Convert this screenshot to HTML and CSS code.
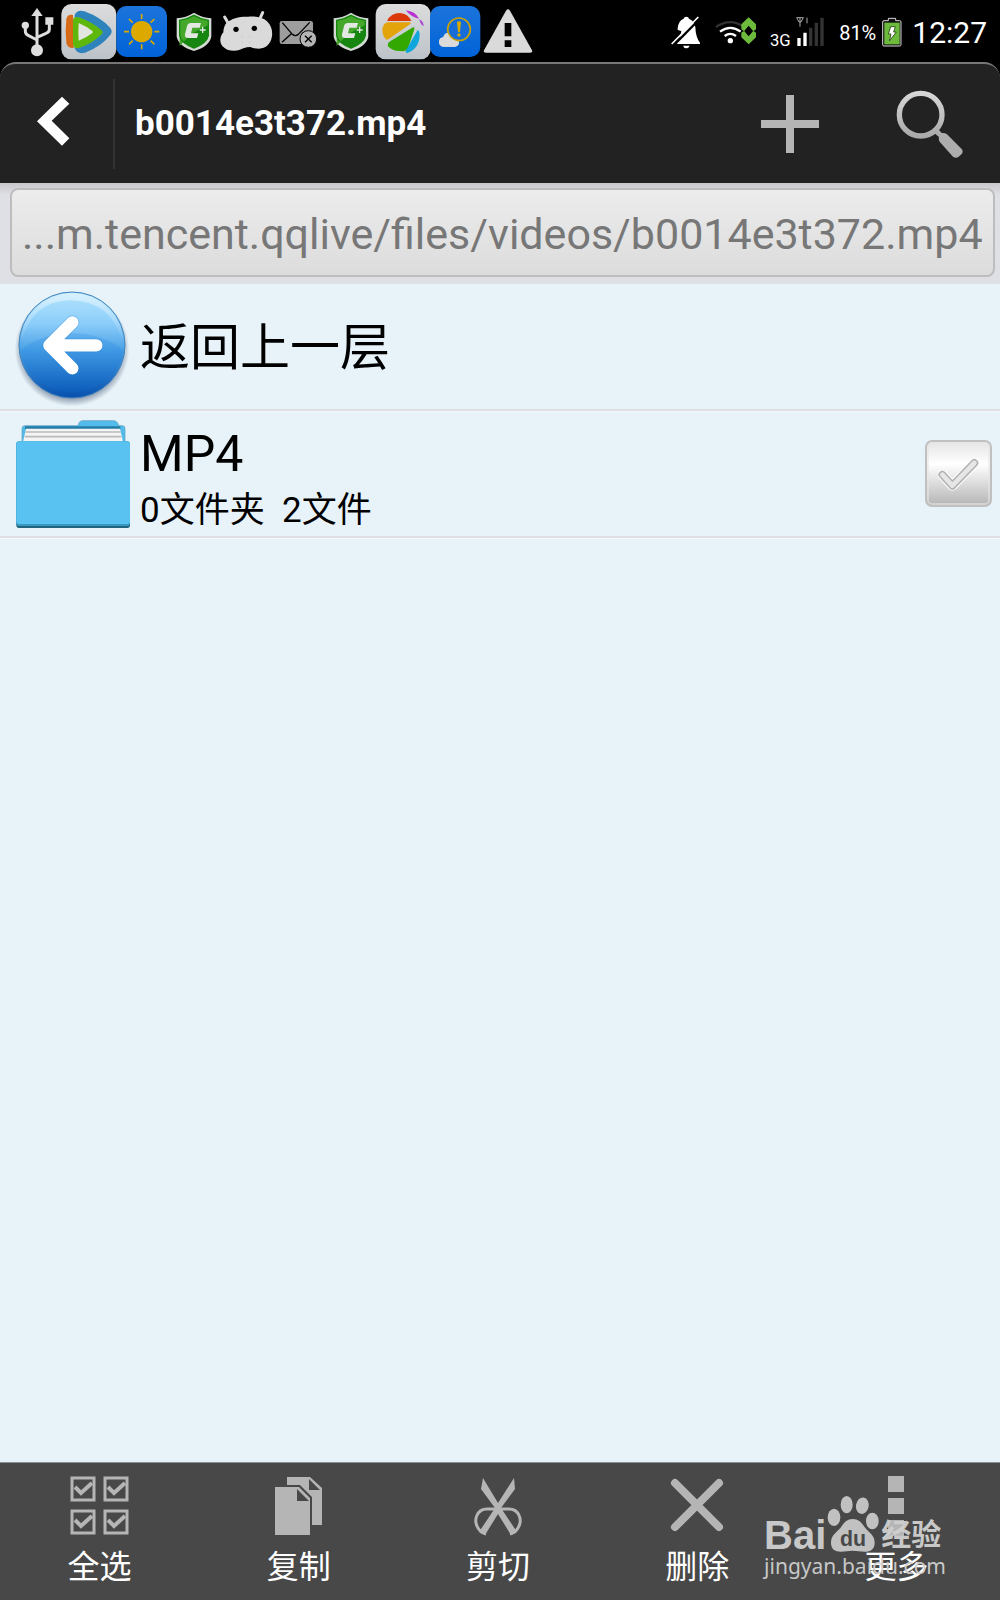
FILE: index.html
```html
<!DOCTYPE html>
<html lang="zh-CN">
<head>
    <meta charset="UTF-8">
    <meta name="viewport" content="width=device-width, initial-scale=1">
    <title>b0014e3t372.mp4</title>
    <link rel="stylesheet" href="styles.css">
</head>
<body>
    <div class="status-bar">
        <div class="notifications">
            <!-- usb -->
            <svg class="note-icon" viewBox="33 0 156 186" fill="none" stroke="#dedede" stroke-width="9">
                <path d="M111 42v110M76 80v14q0 9 10 13l25 13M148 66v22q0 9-10 12l-27 12"/>
                <path d="M111 24l17 24H94zM136 52h24v22h-24z" fill="#dedede" stroke="none"/>
                <circle cx="76" cy="76" r="11" fill="#dedede" stroke="none"/>
                <circle cx="111" cy="151" r="18" fill="#dedede" stroke="none"/>
            </svg>
            <!-- video player -->
            <svg class="note-icon" viewBox="188 0 156 186">
                <defs>
                    <linearGradient id="tile" x1="0" y1="0" x2="0" y2="1">
                        <stop offset="0" stop-color="#dcdcdc"/>
                        <stop offset="1" stop-color="#bcc3c9"/>
                    </linearGradient>
                    <linearGradient id="blueTile" x1="0" y1="0" x2="0" y2="1">
                        <stop offset="0" stop-color="#1c74db"/>
                        <stop offset="1" stop-color="#0063d8"/>
                    </linearGradient>
                </defs>
                <rect x="183" y="12" width="165" height="166" rx="30" fill="url(#tile)"/>
                <path d="M223 45q8-17 29-11 50 18 78 50 8 11 0 21-29 36-76 53-24 6-31-14z" fill="#2f83bd"/>
                <path d="M218 45q-17-3-20 13-4 35 0 70 4 18 22 16z" fill="#d76a16"/>
                <path d="M218 62q1-15 18-10 38 14 67 38 8 7 0 14-30 28-68 40-15 3-17-12z" fill="#5eb80c"/>
                <path d="M235 69q22 9 41 24 4 3 0 6-19 15-41 23-2-27 0-53z" fill="#e2e6df"/>
            </svg>
            <!-- weather -->
            <svg class="note-icon" viewBox="345 0 156 186">
                <rect x="346" y="18" width="152" height="153" rx="30" fill="url(#blueTile)"/>
                <circle cx="422" cy="95" r="32" fill="#dba900"/>
                <path d="M422 42v15M422 133v15M369 95h15M460 95h15M384 57l11 11M449 122l11 11M460 57l-11 11M395 122l-11 11" stroke="#dba900" stroke-width="5" fill="none"/>
            </svg>
            <!-- guard -->
            <svg class="note-icon" viewBox="503 0 156 186">
                <g id="guard">
                    <path d="M581 38q24 15 52 17v55q-6 29-52 43-46-14-52-43V55q28-2 52-17z" fill="#d4dad4"/>
                    <path d="M581 46q20 12 43 15v46q-5 23-43 37-38-14-43-37V61q23-3 43-15z" fill="#168611"/>
                    <path d="M581 46q20 12 43 15v15q-45 14-86 62V61q23-3 43-15z" fill="#45a82b"/>
                    <path d="M538 107V61q23-3 43-15 20 12 43 15v46q-5 23-43 37-38-14-43-37z" fill="none" stroke="#168611" stroke-width="4"/>
                    <path d="M602 69h-30q-10 0-12 10l-6 24q-2 11 9 11h27l4-14h-22l4-17h22z" fill="#e3e8e3"/>
                    <path d="M607 80v19M598 90h18" stroke="#e3e8e3" stroke-width="4"/>
                </g>
            </svg>
            <!-- android -->
            <svg class="note-icon" viewBox="659 0 156 186">
                <path d="M673 51l13 23M787 38l-11 24" stroke="#dadada" stroke-width="9" stroke-linecap="round"/>
                <path d="M678 69C695 54 719 49 744 50C765 48 788 52 800 64C813 76 817 92 815 108C811 133 797 145 776 146C765 146 757 144 750 141C735 142 727 145 719 149C708 153 693 153 681 149C667 143 659 132 660 118C661 109 664 103 669 97C669 87 672 77 678 69z" fill="#dadada"/>
                <circle cx="707" cy="88" r="8" fill="#000"/>
                <circle cx="762" cy="85" r="8" fill="#000"/>
                <path d="M726 109v3M749 108v3M727 125v3M748 125v3" stroke="#bbb" stroke-width="3"/>
            </svg>
            <!-- mail -->
            <svg class="note-icon" viewBox="8 0 156 186">
                <rect x="31" y="63" width="100" height="69" rx="7" fill="#9d9d9d"/>
                <path d="M39 68l30 35q9 8 18 0l34-36M38 127l28-26M122 127L98 98" fill="none" stroke="#000" stroke-width="4"/>
                <circle cx="117" cy="117" r="25" fill="#b5b5b5" stroke="#000" stroke-width="3"/>
                <path d="M107 107l20 20M127 107l-20 20" stroke="#000" stroke-width="4"/>
            </svg>
            <svg class="note-icon" viewBox="503 0 156 186"><use href="#guard"/></svg>
            <!-- pinwheel -->
            <svg class="note-icon" viewBox="322 0 156 186">
                <rect x="318" y="12" width="165" height="166" rx="30" fill="url(#tile)"/>
                <path d="M352 63q11-24 39-24 24 2 34 24z" fill="#dc3908"/>
                <path d="M343 73q5-6 14-6h64q5 3 0 6l-65 45q-6 3-10-3-15-20-3-42z" fill="#e3a30b"/>
                <path d="M430 82q6-1 4 6l-20 60q-6 7-20 5-25 2-39-14-3-7 3-13z" fill="#32a800"/>
                <path d="M444 90q5 2 6 12 0 44-37 57-7-1-4-8z" fill="#0fa6db"/>
                <path d="M408 31q29 3 40 25-20-2-40-25z" fill="#b931d1"/>
                <path d="M449 57q13 8 13 21-10-3-13-21z" fill="#a948d1"/>
            </svg>
            <!-- weather alert -->
            <svg class="note-icon" viewBox="480 0 156 186">
                <rect x="483" y="18" width="151" height="153" rx="30" fill="url(#blueTile)"/>
                <path d="M523 140q-12-1-13-14 1-13 13-14 3-14 16-13 13 2 15 14 16 1 16 15-1 10-12 12z" fill="#dadada"/>
                <circle cx="570" cy="88" r="34" fill="#166dda" stroke="#c9a108" stroke-width="5"/>
                <path d="M523 140q-12-1-13-14 1-13 13-14 3-12 14-13 2 13 16 20 9 4 17 8-1 11-12 13z" fill="#dadada"/>
                <path d="M564 66q6-4 12 0l-3 29q-3 3-6 0z" fill="#d8aa00"/>
                <circle cx="570" cy="105" r="5" fill="#d8aa00"/>
            </svg>
            <!-- warning -->
            <svg class="note-icon" viewBox="636 0 156 186">
                <path d="M708 32q6-8 12 0l66 119q2 7-5 7H647q-7 0-5-7z" fill="#dadada"/>
                <path d="M704 69h20v40h-20zM704 121h20v20h-20z" fill="#000"/>
            </svg>
        </div>

        <div class="system-state">
            <svg width="30" height="62" viewBox="56 0 90 186">
                <path d="M102 50q7 0 8 6 15 6 19 25 1 32 14 47v4H74v-4q10-12 13-35-14-2-11-8 2-23 18-29 1-6 8-6z" fill="#fff"/>
                <path d="M92 137h20q-3 8-10 8t-10-8z" fill="#fff"/>
                <path d="M63 137l82-83" stroke="#000" stroke-width="7"/>
                <path d="M58 132l80-81" stroke="#fff" stroke-width="5"/>
            </svg>
            <svg width="42" height="62" viewBox="194 0 126 186" fill="none">
                <path d="M197 81q43-29 83 0" stroke="#333" stroke-width="7"/>
                <path d="M209 95q31-23 62 0M223 108q17-13 34 0" stroke="#fff" stroke-width="7"/>
                <circle cx="240" cy="122" r="8" fill="#fff"/>
                <path d="M273 73l22-21 22 21v15l-8 6-14-17-14 17-8-6zM273 112l22 21 22-21V98l-8-6-14 17-14-17-8 6z" fill="#6cbb3c"/>
            </svg>
            <svg width="54" height="62" viewBox="371 0 162 186">
                <text class="network" x="368" y="137">3G</text>
                <path d="M448 53h20l-7 13h-6zM458 53v27M479 53v17" fill="none" stroke="#aaa" stroke-width="3"/>
                <path d="M450 114h10v24h-10zM468 98h10v40h-10z" fill="#fff"/>
                <path d="M485 83h10v55h-10zM502 68h10v70h-10zM519 53h10v85h-10z" fill="#333"/>
            </svg>
            <span class="battery-level">81%</span>
            <svg width="20" height="62" viewBox="698 0 60 186">
                <path d="M717 62v-7h22v7h12q4 0 4 4v68q0 4-4 4h-47q-4 0-4-4V66q0-4 4-4z" fill="#111" stroke="#d8d8d8" stroke-width="3"/>
                <path d="M705 68h46v65h-46z" fill="#6cbb3c"/>
                <path d="M724 80h14l-5 16h8l-21 27 5-21h-8z" fill="#fff" stroke="#36581f" stroke-width="3"/>
            </svg>
            <time class="clock">12:27</time>
        </div>
    </div>

    <header class="title-bar">
        <button class="back-button" type="button" aria-label="返回">
            <svg width="34" height="50" viewBox="0 0 102 150">
                <path d="M78 2l22 21-53 51 53 53-22 22L3 76z" fill="#fff"/>
            </svg>
        </button>
        <h1>b0014e3t372.mp4</h1>
        <button class="icon-button" type="button" aria-label="新建">
            <svg width="60" height="60" viewBox="0 0 60 60">
                <path d="M26 1h8v25h25v8H34v25h-8V34H1v-8h25z" fill="#b5b5b5"/>
            </svg>
        </button>
        <button class="icon-button" type="button" aria-label="搜索">
            <svg width="68" height="68" viewBox="0 0 204 204">
                <defs>
                    <linearGradient id="lens" x1="0" y1="0" x2="0" y2="1">
                        <stop offset="0" stop-color="#d6d6d6"/>
                        <stop offset="1" stop-color="#aaa"/>
                    </linearGradient>
                </defs>
                <circle cx="74" cy="74" r="64" fill="none" stroke="url(#lens)" stroke-width="16"/>
                <path d="M112 127l12-13 13 15q10-1 16 4l44 44q6 8 0 15l-10 9q-8 5-16-1l-40-45q-4-6-2-14z" fill="#adadad"/>
            </svg>
        </button>
    </header>

    <nav class="path-bar">
        <button class="path" type="button">...m.tencent.qqlive/files/videos/b0014e3t372.mp4</button>
    </nav>

    <main>
        <ul class="file-list">
            <li>
                <button class="row" type="button">
                    <svg class="row-icon" viewBox="0 0 360 360">
                        <defs>
                            <linearGradient id="ball" x1="0" y1="0" x2="0" y2="1">
                                <stop offset="0" stop-color="#b5e5fc"/>
                                <stop offset="0.3" stop-color="#8bcdfa"/>
                                <stop offset="0.55" stop-color="#4ba0e5"/>
                                <stop offset="1" stop-color="#064fae"/>
                            </linearGradient>
                            <radialGradient id="shadow">
                                <stop offset="0.8" stop-color="#53617d" stop-opacity="0.8"/>
                                <stop offset="1" stop-color="#53617d" stop-opacity="0"/>
                            </radialGradient>
                            <linearGradient id="shine" x1="0" y1="0" x2="0" y2="1">
                                <stop offset="0" stop-color="#fff" stop-opacity="0.5"/>
                                <stop offset="1" stop-color="#fff" stop-opacity="0"/>
                            </linearGradient>
                        </defs>
                        <ellipse cx="180" cy="187" rx="172" ry="171" fill="url(#shadow)"/>
                        <circle cx="180" cy="174" r="159" fill="url(#ball)" stroke="#3d83bd" stroke-width="3"/>
                        <path d="M27 166a153 147 0 0 1 306 0Q298 43 180 40T27 166z" fill="url(#shine)"/>
                        <path d="M25 190q64-51 155-51t155 51a156 142 0 0 1-310 0z" fill="#0070df" opacity="0.15"/>
                        <path d="M181 106l-69 69 69 69M117 175h136" fill="none" stroke="#1877ca" stroke-width="41" stroke-linecap="round" stroke-linejoin="round" opacity="0.35"/>
                        <path d="M181 106l-69 69 69 69M117 175h136" fill="none" stroke="#fff" stroke-width="37" stroke-linecap="round" stroke-linejoin="round"/>
                    </svg>
                    <span class="name">返回上一层</span>
                </button>
            </li>
            <li class="folder">
                <button class="row" type="button">
                    <svg class="row-icon" viewBox="0 0 360 360">
                        <path d="M30 90V38q0-9 9-9h159l4-10q3-5 9-5h94q8 0 11 6l5 9h10q8 0 8 9v52z" fill="#53bceb" stroke="#5a9cb8" stroke-width="2"/>
                        <path d="M39 31h286v9H39z" fill="#257da6"/>
                        <path d="M42 38h282l9 40H33z" fill="#f4f4f4"/>
                        <path d="M40 48h286M38 62h290" stroke="#b9b9b9" stroke-width="5"/>
                        <rect x="13" y="77" width="341" height="259" rx="8" fill="#22647e"/>
                        <rect x="13" y="76" width="341" height="254" rx="8" fill="#3798c4"/>
                        <rect x="13" y="76" width="341" height="248" rx="8" fill="#59c2f0"/>
                    </svg>
                    <span class="info">
                        <span class="name">MP4</span>
                        <span class="detail">0文件夹&nbsp; 2文件</span>
                    </span>
                </button>
                <label class="picker">
                    <input type="checkbox" aria-label="选择 MP4">
                    <svg class="tick" width="42" height="34" viewBox="0 0 126 102" fill="none" stroke-linecap="round" stroke-linejoin="round">
                        <path d="M13 53l30 33 66-68" stroke="#fff" stroke-width="30"/>
                        <path d="M13 53l30 33 66-68" stroke="#b4b4b4" stroke-width="24"/>
                        <path d="M13 53l30 33 66-68" stroke="#e6e6e6" stroke-width="14"/>
                    </svg>
                </label>
            </li>
        </ul>
    </main>

    <footer class="toolbar">
        <button class="tool" type="button">
            <svg width="60" height="60" viewBox="0 0 60 60">
                <defs>
                    <g id="box" fill="none" stroke="#b5b5b5">
                        <path d="M2 2h22v22H2z" stroke-width="3"/>
                        <path d="M5 11l6 6 11-10" stroke-width="4"/>
                    </g>
                </defs>
                <use href="#box"/>
                <use href="#box" x="33"/>
                <use href="#box" y="33"/>
                <use href="#box" x="33" y="33"/>
            </svg>
            全选
        </button>
        <button class="tool" type="button">
            <svg width="60" height="60" viewBox="0 0 60 60" fill="#b5b5b5">
                <path d="M18 1h23l12 11v37H43V21L31 9H18zM40 3v11h11z" fill-rule="evenodd"/>
                <path d="M6 11h24l11 11v37H6zM28 13v12h12z" fill-rule="evenodd"/>
            </svg>
            复制
        </button>
        <button class="tool" type="button">
            <svg width="60" height="60" viewBox="0 0 60 60">
                <path d="M15 2l15 25L46 2l1 11-14 19 16 24-6 3-13-21-13 21-6-3 16-24-14-19z" fill="#b5b5b5"/>
                <path d="M27 33H19C9 33 5 44 10 52q3 5 8 6M33 33h8c10 0 14 11 9 19q-3 5-8 6" fill="none" stroke="#b5b5b5" stroke-width="3"/>
            </svg>
            剪切
        </button>
        <button class="tool" type="button">
            <svg width="60" height="60" viewBox="0 0 60 60">
                <path d="M8 7l44 44M52 7L8 51" stroke="#b5b5b5" stroke-width="8" stroke-linecap="round"/>
            </svg>
            删除
        </button>
        <button class="tool" type="button">
            <svg width="60" height="60" viewBox="0 0 60 60" fill="#b5b5b5">
                <path d="M22 0h16v16H22zM22 22h16v16H22zM22 44h16v16H22z"/>
            </svg>
            更多
        </button>

        <div class="watermark">
            <div class="brand">
                <span>Bai</span>
                <svg width="52" height="56" viewBox="0 0 156 168" fill="#c8c8c8">
                    <ellipse cx="21" cy="64" rx="19" ry="26"/>
                    <ellipse cx="59" cy="26" rx="18" ry="26"/>
                    <ellipse cx="106" cy="29" rx="19" ry="25" transform="rotate(10 106 29)"/>
                    <ellipse cx="136" cy="75" rx="19" ry="25"/>
                    <path d="M77 69c20 0 27 12 38 27 13 16 28 22 28 44 0 20-13 27-30 27-14 0-23-3-36-3s-22 3-36 3c-17 0-29-8-29-27 0-22 15-29 28-44 11-15 18-27 37-27z"/>
                    <text class="paw-text" x="78" y="150">du</text>
                </svg>
                <span class="brand-cn">经验</span>
            </div>
            <div class="site">jingyan.baidu.com</div>
        </div>
    </footer>
</body>
</html>
```

FILE: styles.css
```css
* {
    box-sizing: border-box;
}

body {
    display: flex;
    flex-direction: column;
    min-height: 100vh;
    margin: 0;
    background-color: #e7f3f8;
    color: #000;
    font-family: Roboto, "Noto Sans CJK SC", sans-serif;
}

button {
    border: 0;
    padding: 0;
    background: none;
    color: inherit;
    font: inherit;
    cursor: pointer;
}

svg {
    display: block;
    flex: none;
}

/* status bar */
.status-bar {
    display: flex;
    justify-content: space-between;
    height: 62px;
    padding: 0 13px 0 11px;
    background-color: #000;
    color: #fff;
}

.notifications {
    display: grid;
    grid-template-columns: repeat(10, 1fr);
    width: 523px;
}

.note-icon {
    width: 52px;
    height: 62px;
    overflow: visible;
}

.system-state {
    display: flex;
    align-items: center;
    gap: 14px;
}

.system-state svg {
    overflow: visible;
}

.network {
    fill: #fff;
    font-size: 50px;
}

.battery-level {
    margin-right: -8px;
    padding-top: 3px;
    font-size: 20px;
}

.clock {
    margin-left: -4px;
    padding-top: 2px;
    font-size: 30px;
}

/* title bar */
.title-bar {
    display: flex;
    align-items: center;
    height: 121px;
    border-top: 2px solid #777;
    border-radius: 16px 16px 0 0;
    background-color: #222;
    box-shadow: 0 -16px 0 16px #000;
    clip-path: inset(0);
    color: #fff;
}

.title-bar h1 {
    flex: 1;
    margin: 0;
    padding-left: 20px;
    font-size: 35px;
    font-weight: bold;
}

.back-button {
    display: flex;
    align-items: center;
    justify-content: center;
    width: 115px;
    height: 90px;
    padding: 0 8px 6px 0;
    border-right: 2px solid #333;
}

.icon-button {
    display: flex;
    justify-content: center;
    width: 140px;
}

/* path */
.path-bar {
    padding: 5px 5px 7px 10px;
    background: linear-gradient(#c8c8cc, #dfe0e5 12px);
}

.path {
    display: block;
    width: 100%;
    height: 89px;
    padding: 3px 10px 0;
    overflow: hidden;
    border: 2px solid #bdbdbd;
    border-radius: 8px;
    background: linear-gradient(#ececec, #dcdcdc);
    color: #777;
    font-size: 43px;
    text-align: left;
    white-space: nowrap;
}

/* files */
main {
    flex: 1;
}

.file-list {
    margin: 0;
    padding: 0;
    list-style: none;
}

.file-list li {
    display: flex;
    height: 127px;
    border-bottom: 2px solid #dddfe2;
    box-shadow: 0 1px 0 #f5f8fa;
}

.row {
    display: flex;
    flex: 1;
    align-items: center;
    gap: 8px;
    padding-left: 12px;
    text-align: left;
}

.folder .row {
    padding-top: 5px;
}

.row-icon {
    width: 120px;
    height: 120px;
}

.info {
    display: flex;
    flex-direction: column;
    padding-top: 8px;
}

.name {
    padding-top: 2px;
    font-size: 50px;
    line-height: 60px;
}

.detail {
    font-size: 35px;
    line-height: 54px;
}

.picker {
    display: grid;
    place-items: center;
    padding-right: 8px;
}

.picker input {
    grid-area: 1 / 1;
    width: 67px;
    height: 67px;
    margin: 0;
    appearance: none;
    border: 2px solid #c0c0c0;
    border-radius: 7px;
    background: linear-gradient(#e5e5e5, #fff 35%, #b5b5b5);
    box-shadow: inset 0 0 0 2px rgba(230, 230, 230, 0.6);
}

.tick {
    grid-area: 1 / 1;
    pointer-events: none;
}

/* bottom toolbar */
.toolbar {
    position: relative;
    display: grid;
    grid-template-columns: repeat(5, 1fr);
    height: 138px;
    padding-right: 4px;
    border-top: 1px solid #8a8f91;
    background-color: #484848;
    color: #fff;
}

.tool {
    display: flex;
    flex-direction: column;
    align-items: center;
    gap: 12px;
    padding-top: 13px;
    font-size: 32px;
    line-height: 38px;
}

.watermark {
    position: absolute;
    right: 54px;
    bottom: 20px;
    color: #cfcfcf;
    opacity: 0.95;
    pointer-events: none;
}

.brand {
    display: flex;
    align-items: flex-end;
    gap: 1px;
    font-family: "Liberation Sans", "Noto Sans CJK SC", sans-serif;
    font-size: 40px;
    font-weight: bold;
    line-height: 34px;
}

.brand-cn {
    padding-left: 1px;
    font-size: 30px;
}

.paw-text {
    fill: #484848;
    font-size: 64px;
    text-anchor: middle;
}

.site {
    font-family: "Noto Sans", sans-serif;
    font-size: 21px;
    line-height: 28px;
}
```
